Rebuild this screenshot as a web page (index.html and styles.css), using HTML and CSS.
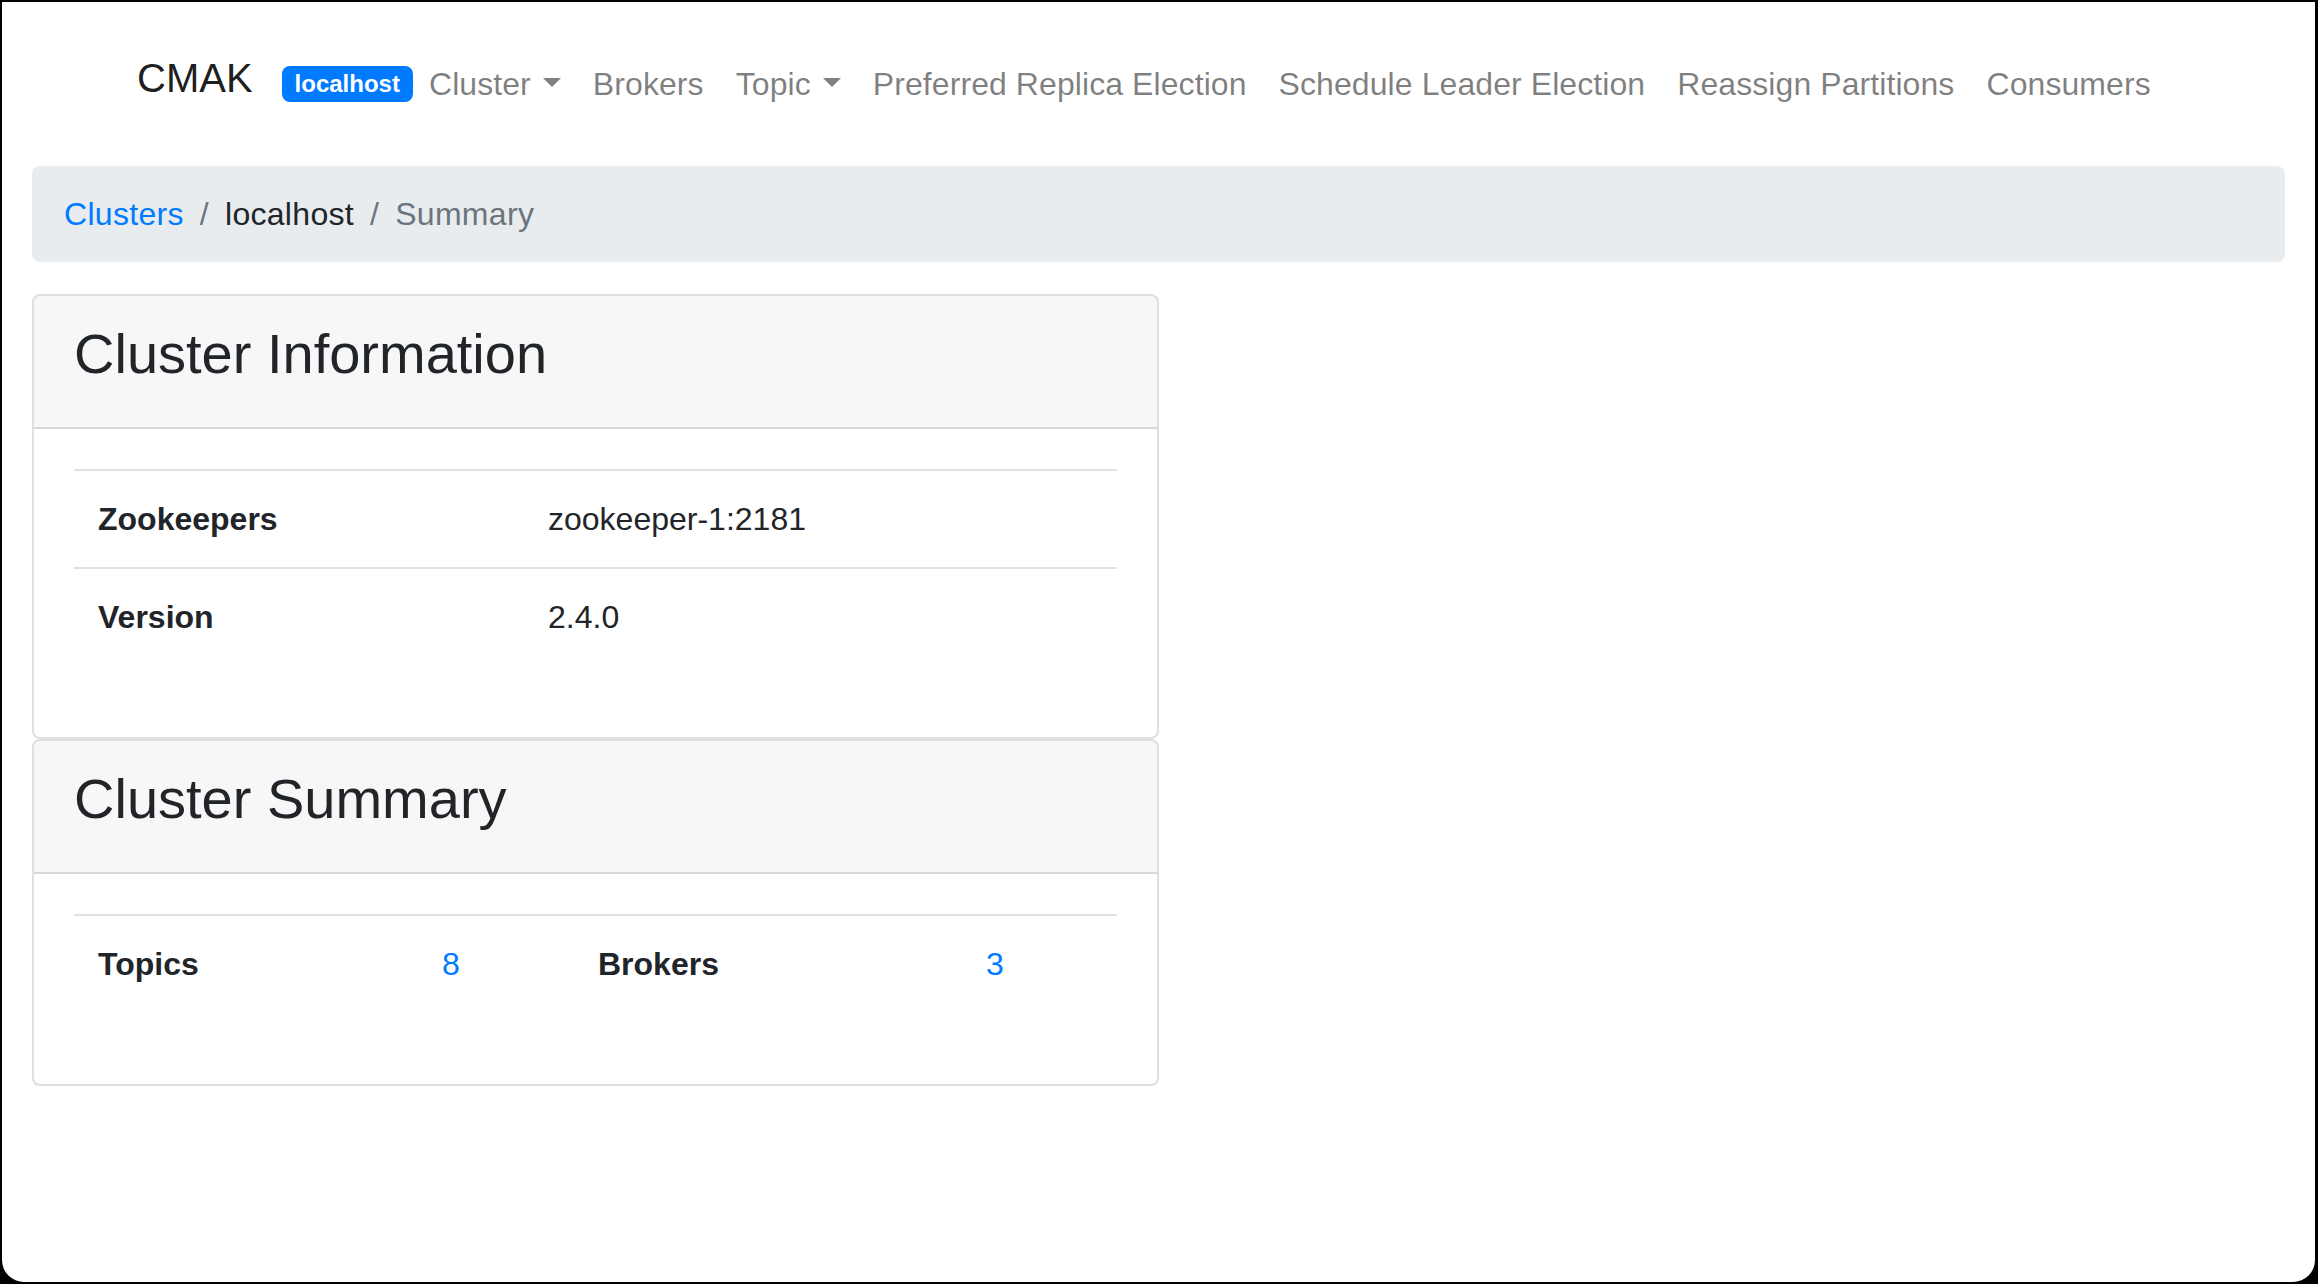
FILE: index.html
```html
<!DOCTYPE html>
<html lang="en">
<head>
<meta charset="utf-8">
<title>CMAK - localhost</title>
<link rel="stylesheet" href="styles.css">
</head>
<body>
<div class="screen">
  <nav class="navbar">
    <a class="brand">CMAK</a>
    <span class="badge">localhost</span>
    <ul class="nav">
      <li><a class="nav-link dropdown">Cluster</a></li>
      <li><a class="nav-link">Brokers</a></li>
      <li><a class="nav-link dropdown">Topic</a></li>
      <li><a class="nav-link">Preferred Replica Election</a></li>
      <li><a class="nav-link">Schedule Leader Election</a></li>
      <li><a class="nav-link">Reassign Partitions</a></li>
      <li><a class="nav-link">Consumers</a></li>
    </ul>
  </nav>
  <main class="container">
    <ol class="breadcrumb">
      <li class="crumb"><a class="link">Clusters</a></li>
      <li class="crumb sep">localhost</li>
      <li class="crumb sep active">Summary</li>
    </ol>
    <section class="card">
      <div class="card-header"><h3 class="card-title">Cluster Information</h3></div>
      <div class="card-body">
        <table class="table">
          <colgroup><col class="c-info-key"><col></colgroup>
          <tbody>
            <tr><th>Zookeepers</th><td>zookeeper-1:2181</td></tr>
            <tr><th>Version</th><td>2.4.0</td></tr>
          </tbody>
        </table>
      </div>
    </section>
    <section class="card">
      <div class="card-header"><h3 class="card-title">Cluster Summary</h3></div>
      <div class="card-body">
        <table class="table">
          <colgroup><col class="c-s1"><col class="c-s2"><col class="c-s3"><col></colgroup>
          <tbody>
            <tr><th>Topics</th><td><a class="link">8</a></td><th>Brokers</th><td><a class="link">3</a></td></tr>
          </tbody>
        </table>
      </div>
    </section>
  </main>
</div>
</body>
</html>
```
FILE: styles.css
```css
html, body {
  margin: 0;
  padding: 0;
  background: #000;
  overflow: hidden;
}
body {
  font-family: "Liberation Sans", Arial, sans-serif;
  color: #212529;
  font-size: 32px;
  line-height: 1.5;
}
.screen {
  margin: 2px 3px 0 2px;
  height: 1280px;
  background: #fff;
  border-radius: 0 0 22px 22px;
  overflow: hidden;
}
.navbar {
  display: flex;
  align-items: center;
  padding: 42px 0 42px 135px;
}
.brand {
  font-size: 40px;
  line-height: 60px;
  padding: 4px 0 16px;
  margin-right: 29px;
  color: rgba(0, 0, 0, 0.9);
}
.badge {
  display: inline-block;
  font-size: 24px;
  font-weight: 700;
  line-height: 1;
  padding: 6px 13px;
  border-radius: 8px;
  background: #007bff;
  color: #fff;
}
.nav {
  display: flex;
  list-style: none;
  margin: 0;
  padding: 0;
}
.nav-link {
  display: block;
  padding: 16px;
  color: rgba(0, 0, 0, 0.5);
  line-height: 48px;
  letter-spacing: 0.08px;
}
.dropdown::after {
  content: "";
  display: inline-block;
  margin-left: 12px;
  vertical-align: 8px;
  border-top: 9px solid;
  border-right: 9px solid transparent;
  border-left: 9px solid transparent;
  border-bottom: 0;
}
.container {
  padding: 0 30px;
}
.breadcrumb {
  display: flex;
  list-style: none;
  margin: 0 0 32px;
  padding: 24px 32px;
  background: #e9ecef;
  border-radius: 8px;
  line-height: 48px;
  letter-spacing: 0.3px;
}
.crumb.sep {
  padding-left: 16px;
}
.crumb.sep::before {
  content: "/";
  display: inline-block;
  padding-right: 16px;
  color: #6c757d;
}
.crumb.active {
  color: #6c757d;
}
.link {
  color: #007bff;
}
.card {
  width: 1127px;
  box-sizing: border-box;
  border: 2px solid rgba(0, 0, 0, 0.125);
  border-radius: 8px;
  background: #fff;
}
.card-header {
  padding: 24px 40px;
  background: rgba(0, 0, 0, 0.03);
  border-bottom: 2px solid rgba(0, 0, 0, 0.125);
  border-radius: 6px 6px 0 0;
}
.card-title {
  margin: 0 0 16px;
  font-size: 56px;
  font-weight: 500;
  line-height: 1.2;
}
.card-body {
  padding: 40px;
}
.table {
  width: 100%;
  table-layout: fixed;
  border-collapse: collapse;
  margin-bottom: 32px;
}
.table th,
.table td {
  padding: 24px;
  border-top: 2px solid #dee2e6;
  text-align: left;
  vertical-align: top;
  line-height: 48px;
}
.table th {
  font-weight: 700;
}
.c-info-key { width: 450px; }
.c-s1 { width: 344px; }
.c-s2 { width: 156px; }
.c-s3 { width: 388px; }
```
